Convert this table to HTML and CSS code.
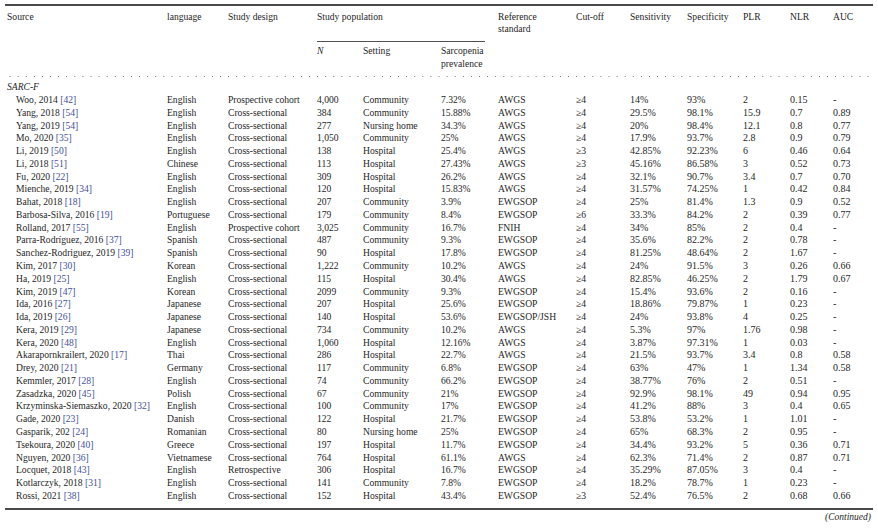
FILE: index.html
```html
<!DOCTYPE html>
<html lang="en">
<head>
<meta charset="utf-8">
<title>SARC-F diagnostic accuracy table</title>
<link rel="stylesheet" href="styles.css">
</head>
<body>
<div class="page">
<table class="data">
<colgroup>
<col class="c-src"><col class="c-lang"><col class="c-design"><col class="c-n"><col class="c-set"><col class="c-prev"><col class="c-refstd"><col class="c-cut"><col class="c-sens"><col class="c-spec"><col class="c-plr"><col class="c-nlr"><col class="c-auc">
</colgroup>
<thead>
<tr class="h1">
<th rowspan="2">Source</th>
<th rowspan="2">language</th>
<th rowspan="2">Study design</th>
<th colspan="3" class="pop">Study population<div class="pop-rule"></div></th>
<th rowspan="2">Reference<br>standard</th>
<th rowspan="2">Cut-off</th>
<th rowspan="2">Sensitivity</th>
<th rowspan="2">Specificity</th>
<th rowspan="2">PLR</th>
<th rowspan="2">NLR</th>
<th rowspan="2">AUC</th>
</tr>
<tr class="h2">
<th><i>N</i></th>
<th>Setting</th>
<th>Sarcopenia<br>prevalence</th>
</tr>
<tr class="dots"><td colspan="13"></td></tr>
</thead>
<tbody>
<tr class="group"><td colspan="13">SARC-F</td></tr>
<tr><td class="src">Woo, 2014 <span class="ref">[42]</span></td><td>English</td><td>Prospective cohort</td><td>4,000</td><td>Community</td><td>7.32%</td><td>AWGS</td><td>≥4</td><td class="num">14%</td><td class="num">93%</td><td class="num">2</td><td class="num">0.15</td><td class="num">-</td></tr>
<tr><td class="src">Yang, 2018 <span class="ref">[54]</span></td><td>English</td><td>Cross-sectional</td><td>384</td><td>Community</td><td>15.88%</td><td>AWGS</td><td>≥4</td><td class="num">29.5%</td><td class="num">98.1%</td><td class="num">15.9</td><td class="num">0.7</td><td class="num">0.89</td></tr>
<tr><td class="src">Yang, 2019 <span class="ref">[54]</span></td><td>English</td><td>Cross-sectional</td><td>277</td><td>Nursing home</td><td>34.3%</td><td>AWGS</td><td>≥4</td><td class="num">20%</td><td class="num">98.4%</td><td class="num">12.1</td><td class="num">0.8</td><td class="num">0.77</td></tr>
<tr><td class="src">Mo, 2020 <span class="ref">[35]</span></td><td>English</td><td>Cross-sectional</td><td>1,050</td><td>Community</td><td>25%</td><td>AWGS</td><td>≥4</td><td class="num">17.9%</td><td class="num">93.7%</td><td class="num">2.8</td><td class="num">0.9</td><td class="num">0.79</td></tr>
<tr><td class="src">Li, 2019 <span class="ref">[50]</span></td><td>English</td><td>Cross-sectional</td><td>138</td><td>Hospital</td><td>25.4%</td><td>AWGS</td><td>≥3</td><td class="num">42.85%</td><td class="num">92.23%</td><td class="num">6</td><td class="num">0.46</td><td class="num">0.64</td></tr>
<tr><td class="src">Li, 2018 <span class="ref">[51]</span></td><td>Chinese</td><td>Cross-sectional</td><td>113</td><td>Hospital</td><td>27.43%</td><td>AWGS</td><td>≥3</td><td class="num">45.16%</td><td class="num">86.58%</td><td class="num">3</td><td class="num">0.52</td><td class="num">0.73</td></tr>
<tr><td class="src">Fu, 2020 <span class="ref">[22]</span></td><td>English</td><td>Cross-sectional</td><td>309</td><td>Hospital</td><td>26.2%</td><td>AWGS</td><td>≥4</td><td class="num">32.1%</td><td class="num">90.7%</td><td class="num">3.4</td><td class="num">0.7</td><td class="num">0.70</td></tr>
<tr><td class="src">Mienche, 2019 <span class="ref">[34]</span></td><td>English</td><td>Cross-sectional</td><td>120</td><td>Hospital</td><td>15.83%</td><td>AWGS</td><td>≥4</td><td class="num">31.57%</td><td class="num">74.25%</td><td class="num">1</td><td class="num">0.42</td><td class="num">0.84</td></tr>
<tr><td class="src">Bahat, 2018 <span class="ref">[18]</span></td><td>English</td><td>Cross-sectional</td><td>207</td><td>Community</td><td>3.9%</td><td>EWGSOP</td><td>≥4</td><td class="num">25%</td><td class="num">81.4%</td><td class="num">1.3</td><td class="num">0.9</td><td class="num">0.52</td></tr>
<tr><td class="src">Barbosa-Silva, 2016 <span class="ref">[19]</span></td><td>Portuguese</td><td>Cross-sectional</td><td>179</td><td>Community</td><td>8.4%</td><td>EWGSOP</td><td>≥6</td><td class="num">33.3%</td><td class="num">84.2%</td><td class="num">2</td><td class="num">0.39</td><td class="num">0.77</td></tr>
<tr><td class="src">Rolland, 2017 <span class="ref">[55]</span></td><td>English</td><td>Prospective cohort</td><td>3,025</td><td>Community</td><td>16.7%</td><td>FNIH</td><td>≥4</td><td class="num">34%</td><td class="num">85%</td><td class="num">2</td><td class="num">0.4</td><td class="num">-</td></tr>
<tr><td class="src">Parra-Rodríguez, 2016 <span class="ref">[37]</span></td><td>Spanish</td><td>Cross-sectional</td><td>487</td><td>Community</td><td>9.3%</td><td>EWGSOP</td><td>≥4</td><td class="num">35.6%</td><td class="num">82.2%</td><td class="num">2</td><td class="num">0.78</td><td class="num">-</td></tr>
<tr><td class="src">Sanchez-Rodriguez, 2019 <span class="ref">[39]</span></td><td>Spanish</td><td>Cross-sectional</td><td>90</td><td>Hospital</td><td>17.8%</td><td>EWGSOP</td><td>≥4</td><td class="num">81.25%</td><td class="num">48.64%</td><td class="num">2</td><td class="num">1.67</td><td class="num">-</td></tr>
<tr><td class="src">Kim, 2017 <span class="ref">[30]</span></td><td>Korean</td><td>Cross-sectional</td><td>1,222</td><td>Community</td><td>10.2%</td><td>AWGS</td><td>≥4</td><td class="num">24%</td><td class="num">91.5%</td><td class="num">3</td><td class="num">0.26</td><td class="num">0.66</td></tr>
<tr><td class="src">Ha, 2019 <span class="ref">[25]</span></td><td>English</td><td>Cross-sectional</td><td>115</td><td>Hospital</td><td>30.4%</td><td>AWGS</td><td>≥4</td><td class="num">82.85%</td><td class="num">46.25%</td><td class="num">2</td><td class="num">1.79</td><td class="num">0.67</td></tr>
<tr><td class="src">Kim, 2019 <span class="ref">[47]</span></td><td>Korean</td><td>Cross-sectional</td><td>2099</td><td>Community</td><td>9.3%</td><td>EWGSOP</td><td>≥4</td><td class="num">15.4%</td><td class="num">93.6%</td><td class="num">2</td><td class="num">0.16</td><td class="num">-</td></tr>
<tr><td class="src">Ida, 2016 <span class="ref">[27]</span></td><td>Japanese</td><td>Cross-sectional</td><td>207</td><td>Hospital</td><td>25.6%</td><td>EWGSOP</td><td>≥4</td><td class="num">18.86%</td><td class="num">79.87%</td><td class="num">1</td><td class="num">0.23</td><td class="num">-</td></tr>
<tr><td class="src">Ida, 2019 <span class="ref">[26]</span></td><td>Japanese</td><td>Cross-sectional</td><td>140</td><td>Hospital</td><td>53.6%</td><td>EWGSOP/JSH</td><td>≥4</td><td class="num">24%</td><td class="num">93.8%</td><td class="num">4</td><td class="num">0.25</td><td class="num">-</td></tr>
<tr><td class="src">Kera, 2019 <span class="ref">[29]</span></td><td>Japanese</td><td>Cross-sectional</td><td>734</td><td>Community</td><td>10.2%</td><td>AWGS</td><td>≥4</td><td class="num">5.3%</td><td class="num">97%</td><td class="num">1.76</td><td class="num">0.98</td><td class="num">-</td></tr>
<tr><td class="src">Kera, 2020 <span class="ref">[48]</span></td><td>English</td><td>Cross-sectional</td><td>1,060</td><td>Hospital</td><td>12.16%</td><td>AWGS</td><td>≥4</td><td class="num">3.87%</td><td class="num">97.31%</td><td class="num">1</td><td class="num">0.03</td><td class="num">-</td></tr>
<tr><td class="src">Akarapornkrailert, 2020 <span class="ref">[17]</span></td><td>Thai</td><td>Cross-sectional</td><td>286</td><td>Hospital</td><td>22.7%</td><td>AWGS</td><td>≥4</td><td class="num">21.5%</td><td class="num">93.7%</td><td class="num">3.4</td><td class="num">0.8</td><td class="num">0.58</td></tr>
<tr><td class="src">Drey, 2020 <span class="ref">[21]</span></td><td>Germany</td><td>Cross-sectional</td><td>117</td><td>Community</td><td>6.8%</td><td>EWGSOP</td><td>≥4</td><td class="num">63%</td><td class="num">47%</td><td class="num">1</td><td class="num">1.34</td><td class="num">0.58</td></tr>
<tr><td class="src">Kemmler, 2017 <span class="ref">[28]</span></td><td>English</td><td>Cross-sectional</td><td>74</td><td>Community</td><td>66.2%</td><td>EWGSOP</td><td>≥4</td><td class="num">38.77%</td><td class="num">76%</td><td class="num">2</td><td class="num">0.51</td><td class="num">-</td></tr>
<tr><td class="src">Zasadzka, 2020 <span class="ref">[45]</span></td><td>Polish</td><td>Cross-sectional</td><td>67</td><td>Community</td><td>21%</td><td>EWGSOP</td><td>≥4</td><td class="num">92.9%</td><td class="num">98.1%</td><td class="num">49</td><td class="num">0.94</td><td class="num">0.95</td></tr>
<tr><td class="src">Krzyminska-Siemaszko, 2020 <span class="ref">[32]</span></td><td>English</td><td>Cross-sectional</td><td>100</td><td>Community</td><td>17%</td><td>EWGSOP</td><td>≥4</td><td class="num">41.2%</td><td class="num">88%</td><td class="num">3</td><td class="num">0.4</td><td class="num">0.65</td></tr>
<tr><td class="src">Gade, 2020 <span class="ref">[23]</span></td><td>Danish</td><td>Cross-sectional</td><td>122</td><td>Hospital</td><td>21.7%</td><td>EWGSOP</td><td>≥4</td><td class="num">53.8%</td><td class="num">53.2%</td><td class="num">1</td><td class="num">1.01</td><td class="num">-</td></tr>
<tr><td class="src">Gasparik, 202 <span class="ref">[24]</span></td><td>Romanian</td><td>Cross-sectional</td><td>80</td><td>Nursing home</td><td>25%</td><td>EWGSOP</td><td>≥4</td><td class="num">65%</td><td class="num">68.3%</td><td class="num">2</td><td class="num">0.95</td><td class="num">-</td></tr>
<tr><td class="src">Tsekoura, 2020 <span class="ref">[40]</span></td><td>Greece</td><td>Cross-sectional</td><td>197</td><td>Hospital</td><td>11.7%</td><td>EWGSOP</td><td>≥4</td><td class="num">34.4%</td><td class="num">93.2%</td><td class="num">5</td><td class="num">0.36</td><td class="num">0.71</td></tr>
<tr><td class="src">Nguyen, 2020 <span class="ref">[36]</span></td><td>Vietnamese</td><td>Cross-sectional</td><td>764</td><td>Hospital</td><td>61.1%</td><td>AWGS</td><td>≥4</td><td class="num">62.3%</td><td class="num">71.4%</td><td class="num">2</td><td class="num">0.87</td><td class="num">0.71</td></tr>
<tr><td class="src">Locquet, 2018 <span class="ref">[43]</span></td><td>English</td><td>Retrospective</td><td>306</td><td>Hospital</td><td>16.7%</td><td>EWGSOP</td><td>≥4</td><td class="num">35.29%</td><td class="num">87.05%</td><td class="num">3</td><td class="num">0.4</td><td class="num">-</td></tr>
<tr><td class="src">Kotlarczyk, 2018 <span class="ref">[31]</span></td><td>English</td><td>Cross-sectional</td><td>141</td><td>Community</td><td>7.8%</td><td>EWGSOP</td><td>≥4</td><td class="num">18.2%</td><td class="num">78.7%</td><td class="num">1</td><td class="num">0.23</td><td class="num">-</td></tr>
<tr class="last"><td class="src">Rossi, 2021 <span class="ref">[38]</span></td><td>English</td><td>Cross-sectional</td><td>152</td><td>Hospital</td><td>43.4%</td><td>EWGSOP</td><td>≥3</td><td class="num">52.4%</td><td class="num">76.5%</td><td class="num">2</td><td class="num">0.68</td><td class="num">0.66</td></tr>
</tbody>
</table>
<p class="continued">(Continued)</p>
</div>
</body>
</html>
```

FILE: styles.css
```css
html, body {
  margin: 0;
  padding: 0;
  background: #ffffff;
}

body {
  font-family: "Liberation Serif", "Times New Roman", serif;
  color: #262626;
}

.page {
  padding: 4px 5px 0 5px;
}

.data {
  width: 868px;
  table-layout: fixed;
  border-collapse: separate;
  border-spacing: 0;
  border-top: 2px solid #4a4a4a;
  border-bottom: 2px solid #4a4a4a;
  font-size: 9.6px;
  line-height: 12.77px;
}

.c-src { width: 160px; }
.c-lang { width: 61px; }
.c-design { width: 89px; }
.c-n { width: 46px; }
.c-set { width: 78px; }
.c-prev { width: 57px; }
.c-refstd { width: 78px; }
.c-cut { width: 54px; }
.c-sens { width: 57px; }
.c-spec { width: 56px; }
.c-plr { width: 47px; }
.c-nlr { width: 43px; }
.c-auc { width: 42px; }

.data th,
.data td {
  padding: 0 0 0 2px;
  text-align: left;
  font-weight: normal;
  vertical-align: top;
  white-space: nowrap;
}

.h1 th {
  padding-top: 4.5px;
}

.pop-rule {
  margin: 18px 11px 0 0;
  border-top: 1px solid #505050;
}

.h2 th {
  padding-top: 3px;
  padding-bottom: 5px;
}

.dots td {
  height: 1px;
  padding: 0;
  background-image: radial-gradient(circle, #6a6a6a 0 0.7px, transparent 0.8px);
  background-size: 8.1px 1.6px;
  background-repeat: repeat-x;
  background-position: 1px 0;
}

.group td {
  padding-top: 4.5px;
  font-style: italic;
}

.data td.src {
  padding-left: 11px;
}

.data td.num {
  font-size: 10px;
}

.last td {
  padding-bottom: 5.5px;
}

.ref {
  color: #43509c;
}

.continued {
  margin: 0;
  width: 866px;
  text-align: right;
  font-style: italic;
  font-size: 9.5px;
  line-height: 14px;
  color: #262626;
}
```
